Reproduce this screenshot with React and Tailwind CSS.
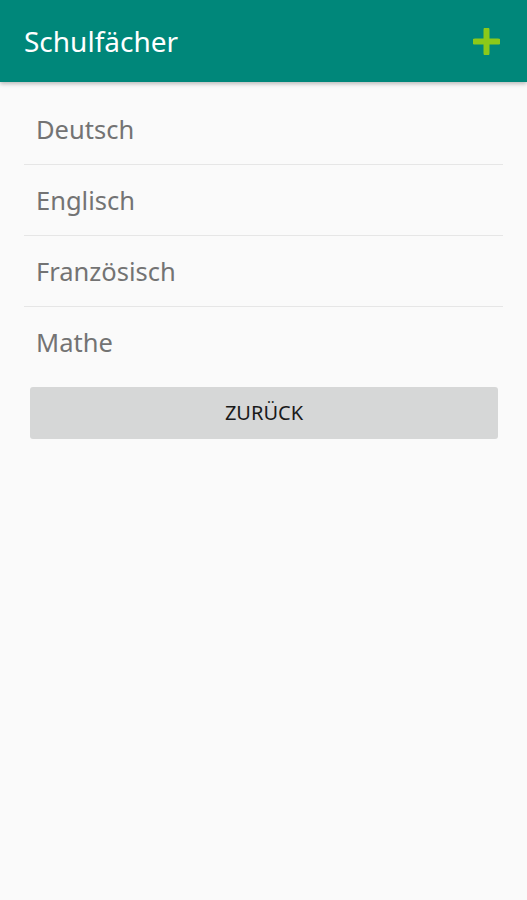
export default function App() {
  const subjects = ["Deutsch", "Englisch", "Französisch", "Mathe"];
  return (
    <div className="min-h-[900px] bg-[#fafafa]" style={{ fontFamily: '"Noto Sans", "Open Sans", sans-serif' }}>
      <header className="relative z-10 flex h-[82px] items-center justify-between bg-[#00877a] pl-[24px] pr-[27px] shadow-[0_2px_4px_rgba(0,0,0,0.25)]">
        <h1 className="text-[28px] font-normal text-white">Schulfächer</h1>
        <svg width="27" height="27" viewBox="0 0 27 27">
          <path d="M13.5 2v23M2 13.5h23" stroke="#8cc919" strokeWidth="6" strokeLinecap="round" />
        </svg>
      </header>
      <ul className="mx-[24px] pt-[12px]">
        {subjects.map((s, i) => (
          <li
            key={s}
            className={`flex h-[71px] items-center pl-[12px] text-[25.5px] text-[#737373] ${i < subjects.length - 1 ? "border-b border-[#e6e6e6]" : ""}`}
          >
            {s}
          </li>
        ))}
      </ul>
      <div className="mt-[9px] px-[30px] pr-[29px]">
        <button className="flex h-[52px] w-full items-center justify-center rounded-[3px] bg-[#d6d7d7] text-[20px] text-[#1a1a1a]">
          ZURÜCK
        </button>
      </div>
    </div>
  );
}
